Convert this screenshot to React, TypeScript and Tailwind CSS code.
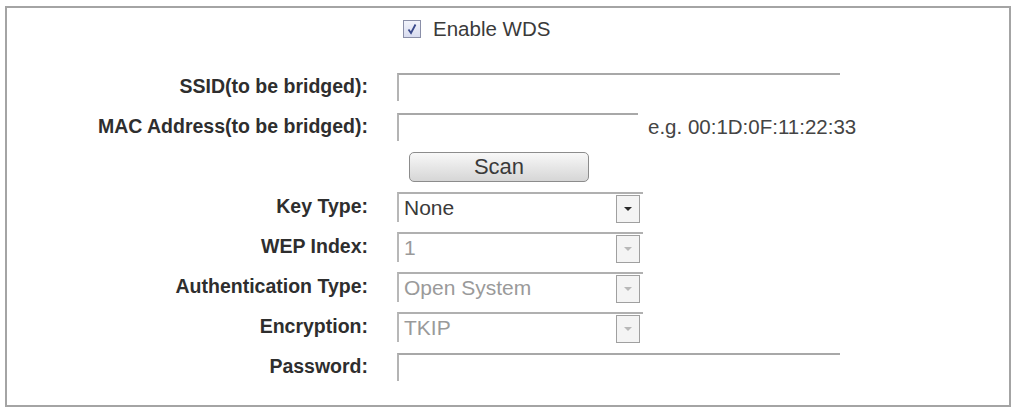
import React from "react";

function TextInput({ w }: { w: string }) {
  return (
    <div className={`${w} h-[28px] border-t-2 border-l-2 border-t-[#a8a8a8] border-l-[#b4b4b4] bg-white`} />
  );
}

function Select({ value, disabled }: { value: string; disabled?: boolean }) {
  return (
    <div className="w-[246px] h-[30px] flex items-stretch border-t-2 border-l-2 border-t-[#b0b0b0] border-l-[#b8b8b8] bg-white">
      <div
        className={`flex-1 flex items-center pl-[5px] text-[21px] ${disabled ? "text-[#9a9a9a]" : "text-[#3a3a3a]"}`}
      >
        {value}
      </div>
      <div className="w-[24px] h-[28px] mt-[1px] mr-[3px] border border-[#a0a0a0] bg-[#f4f4f4] flex items-center justify-center">
        <svg width="10" height="6" viewBox="0 0 10 6">
          <path d="M1 1 L9 1 L5 5 Z" fill={disabled ? "#b8b8b8" : "#2a2a2a"} />
        </svg>
      </div>
    </div>
  );
}

function Row({ label, children }: { label?: string; children: React.ReactNode }) {
  return (
    <div className="grid grid-cols-[361px_1fr] gap-x-[29px] h-[40px] items-center">
      <div className="text-right font-bold text-[19.5px] text-[#2e2e2e] whitespace-nowrap">{label}</div>
      <div className="flex items-center">{children}</div>
    </div>
  );
}

export default function App() {
  return (
    <div
      className="w-[1015px] h-[412px] bg-white pt-[6px] pl-[5px] pr-[4px]"
      style={{ fontFamily: '"Liberation Sans", Arial, sans-serif' }}
    >
      <div className="h-[401px] border-2 border-[#a4a4a4] bg-white">
        <div className="h-[40px] flex items-center pl-[396px] pt-[2px]">
          <div className="w-[18px] h-[18px] border border-[#8a8fa8] bg-gradient-to-b from-[#f2f4fb] to-[#d8dcef] flex items-center justify-center">
            <svg width="12" height="12" viewBox="0 0 12 12">
              <path d="M2.5 6.5 L5 10 L9.5 1.5" stroke="#3a4a8c" strokeWidth="1.8" fill="none" />
            </svg>
          </div>
          <span className="ml-[12px] text-[20.5px] text-[#3a3a3a]">Enable WDS</span>
        </div>
        <div className="h-[19px]" />
        <Row label="SSID(to be bridged):">
          <TextInput w="w-[443px]" />
        </Row>
        <Row label="MAC Address(to be bridged):">
          <TextInput w="w-[241px]" />
          <span className="ml-[10px] text-[20.5px] text-[#444]">e.g. 00:1D:0F:11:22:33</span>
        </Row>
        <Row>
          <button className="ml-[12px] w-[180px] h-[30px] rounded-[5px] border border-[#8c8c8c] bg-gradient-to-b from-[#f8f8f8] to-[#d6d6d6] text-[22px] text-[#3a3a3a] leading-none">
            Scan
          </button>
        </Row>
        <Row label="Key Type:">
          <Select value="None" />
        </Row>
        <Row label="WEP Index:">
          <Select value="1" disabled />
        </Row>
        <Row label="Authentication Type:">
          <Select value="Open System" disabled />
        </Row>
        <Row label="Encryption:">
          <Select value="TKIP" disabled />
        </Row>
        <Row label="Password:">
          <TextInput w="w-[443px]" />
        </Row>
      </div>
    </div>
  );
}
